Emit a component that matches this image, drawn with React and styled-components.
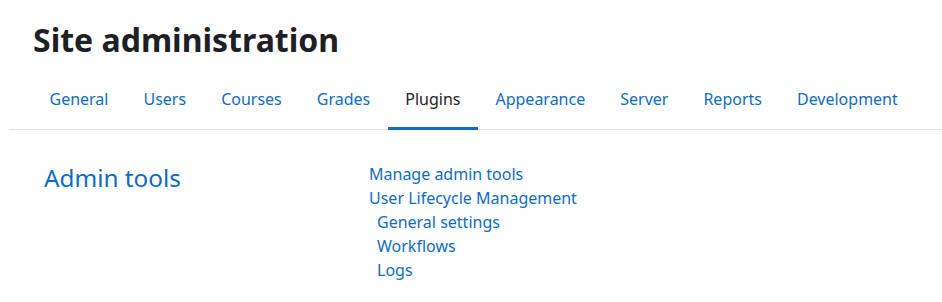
import React from "react";
import styled, { createGlobalStyle } from "styled-components";

const Global = createGlobalStyle`
  html, body { margin: 0; padding: 0; background: #fff; }
  body { font-family: "Noto Sans", "Open Sans", sans-serif; color: #1d2125; }
`;

const Page = styled.div`
  padding: 0 0 0 9px;
`;

const Title = styled.h1`
  margin: 0;
  padding: 19px 0 0 24px;
  font-size: 32px;
  font-weight: 700;
  line-height: 42px;
  color: #1d2125;
`;

const Tabs = styled.nav`
  display: flex;
  margin-top: 10px;
  padding-left: 23px;
  border-bottom: 1px solid #dee2e6;
`;

const Tab = styled.a`
  display: block;
  padding: 16px 17.5px 16px;
  font-size: 16px;
  line-height: 24px;
  text-decoration: none;
  color: ${(p) => (p.$active ? "#1d2125" : "#0f6cbf")};
  border-bottom: 3px solid ${(p) => (p.$active ? "#0f6cbf" : "transparent")};
  margin-bottom: -1px;
`;

const Section = styled.div`
  display: grid;
  grid-template-columns: 325px 1fr;
  padding: 32px 0 0 35px;
`;

const SectionTitle = styled.h2`
  margin: 0;
  font-size: 24.3px;
  font-weight: 400;
  line-height: 1.3;
  color: #0f6cbf;
`;

const LinkList = styled.ul`
  list-style: none;
  margin: 0;
  padding: 0;
`;

const Item = styled.li`
  font-size: 16px;
  line-height: 24px;
  padding-left: ${(p) => (p.$sub ? "8px" : "0")};
`;

const Link = styled.a`
  color: #0f6cbf;
  text-decoration: none;
`;

const tabs = ["General", "Users", "Courses", "Grades", "Plugins", "Appearance", "Server", "Reports", "Development"];

export default function App() {
  return (
    <>
      <Global />
      <Page>
        <Title>Site administration</Title>
        <Tabs>
          {tabs.map((t) => (
            <Tab key={t} href="#" $active={t === "Plugins"}>{t}</Tab>
          ))}
        </Tabs>
        <Section>
          <SectionTitle>Admin tools</SectionTitle>
          <LinkList>
            <Item><Link href="#">Manage admin tools</Link></Item>
            <Item><Link href="#">User Lifecycle Management</Link></Item>
            <Item $sub><Link href="#">General settings</Link></Item>
            <Item $sub><Link href="#">Workflows</Link></Item>
            <Item $sub><Link href="#">Logs</Link></Item>
          </LinkList>
        </Section>
      </Page>
    </>
  );
}
